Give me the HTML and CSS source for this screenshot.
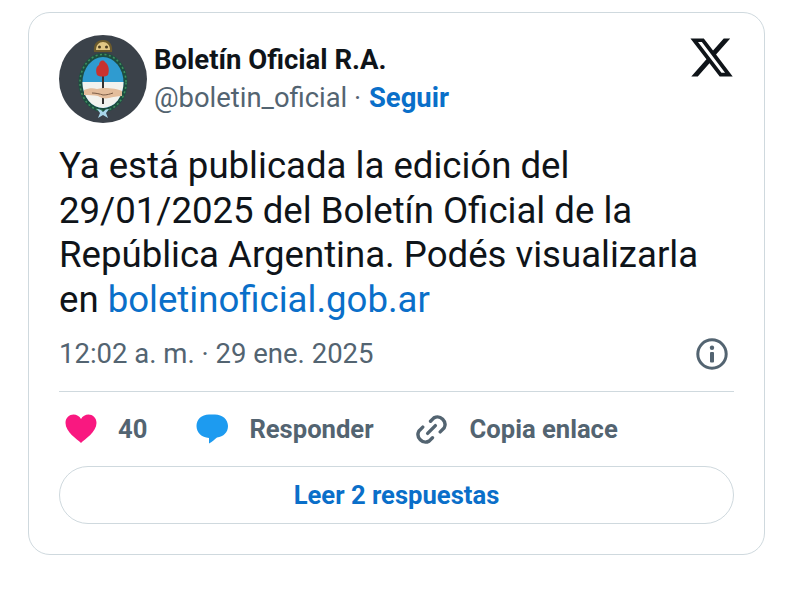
FILE: index.html
```html
<!DOCTYPE html>
<html lang="es">
<head>
    <meta charset="UTF-8">
    <title>Boletín Oficial R.A.</title>
    <link rel="stylesheet" href="styles.css">
</head>
<body>

<div class="tweet">
    <div class="header">
        <svg class="avatar" viewBox="0 0 88 88">
            <circle cx="44" cy="44" r="44" fill="#3b424a"/>
            <!-- sol -->
            <path d="M35 17 c-1 -8 3 -12 9 -12 c6 0 10 4 9 12 z" fill="#6b5a2c"/>
            <path d="M37 15 c0 -5 3 -8 7 -8 c4 0 7 3 7 8 z" fill="#e0c684"/>
            <circle cx="40.500" cy="12" r="1.500" fill="#4a3d20"/>
            <circle cx="47.500" cy="12" r="1.500" fill="#4a3d20"/>
            <!-- escudo -->
            <ellipse cx="44" cy="47.500" rx="24.500" ry="29.500" fill="#1d4d40"/>
            <ellipse cx="44" cy="47.500" rx="23" ry="28" fill="none" stroke="#3f8f5e" stroke-width="1.600" stroke-dasharray="2 2.500"/>
            <ellipse cx="44" cy="47.500" rx="20.500" ry="25.500" fill="#2f9bd0"/>
            <path d="M23.500 47 h41 a20.500 25.500 0 0 1 -41 1 z" fill="#f2f2ee"/>
            <rect x="43" y="36" width="2" height="33" fill="#33312f"/>
            <path d="M38 40 c-2 -6 0 -9 2 -10 c0 -4 4 -6 6 -3 c3 2 5 7 3 13 c-3 2 -8 2 -11 0 z" fill="#c8322e"/>
            <path d="M25 55 c5 -2 9 -2 13 -1 l6 -1 c5 0 12 0 19 3 v5 c-5 0 -9 1 -13 2 c-4 1 -8 0 -11 -2 c-4 -1 -9 -1 -14 -1 z" fill="#e3bd9c"/>
            <path d="M33 58 c4 0 8 1 11 2 c4 0 7 -1 10 -2" fill="none" stroke="#7a5b45" stroke-width="1"/>
            <!-- cinta -->
            <path d="M38 74 c3 0 4 1 6 3 c2 -2 3 -3 6 -3 l-3 4 l2 5 l-5 -3 l-5 3 l2 -5 z" fill="#a9d6ea"/>
        </svg>
        <div class="author">
            <div class="name">Boletín Oficial R.A.</div>
            <div class="handle">@boletin_oficial <span class="dot">·</span> <a class="follow">Seguir</a></div>
        </div>
        <svg class="x-logo" viewBox="0 0 24 24">
            <path d="M18.244 2.25h3.308l-7.227 8.26 8.502 11.24H16.17l-5.214-6.817L4.99 21.75H1.68l7.73-8.835L1.254 2.25H8.08l4.713 6.231zm-1.161 17.52h1.833L7.084 4.126H5.117z"/>
        </svg>
    </div>

    <p class="text">Ya está publicada la edición del<br>29/01/2025 del Boletín Oficial de la<br>República Argentina. Podés visualizarla<br>en <a class="link">boletinoficial.gob.ar</a></p>

    <div class="meta">
        <span class="date">12:02 a. m. · 29 ene. 2025</span>
        <svg class="info" viewBox="0 0 34 34">
            <circle cx="17" cy="17" r="14.200" fill="none" stroke="#536471" stroke-width="3"/>
            <circle cx="17" cy="10.800" r="2.200" fill="#536471"/>
            <rect x="15" y="15" width="4" height="10.500" rx="1" fill="#536471"/>
        </svg>
    </div>

    <div class="actions">
        <div class="action like">
            <svg class="icon" viewBox="0 0 32 30">
                <path d="M16 29 C12 25 0.500 18 0.500 9 C0.500 3.500 4.500 0.500 8.500 0.500 C11.500 0.500 14.500 2 16 5 C17.500 2 20.500 0.500 23.500 0.500 C27.500 0.500 31.500 3.500 31.500 9 C31.500 18 20 25 16 29 Z" fill="#f91880"/>
            </svg>
            <span>40</span>
        </div>
        <div class="action reply">
            <svg class="icon" viewBox="0 0 32 30">
                <path d="M13 0.500 H19 C26.500 0.500 32 5.500 32 12 C32 18.500 27.500 22.500 21 23.500 C18.500 25.500 16 28 13 29.500 L13 24 C5.500 23.500 0.500 18.500 0.500 12 C0.500 5.500 5.500 0.500 13 0.500 Z" fill="#1d9bf0"/>
            </svg>
            <span>Responder</span>
        </div>
        <div class="action copy">
            <svg class="icon" viewBox="0 0 32 32" fill="none" stroke="#536471" stroke-width="3.500" stroke-linecap="round">
                <path d="M15 7.500 L18.500 4 A7.800 7.800 0 0 1 29 14.500 L25 18.500"/>
                <path d="M17 24.500 L13.500 28 A7.800 7.800 0 0 1 3 17.500 L7 13.500"/>
                <path d="M12 20 L20 12"/>
            </svg>
            <span>Copia enlace</span>
        </div>
    </div>

    <div class="more">Leer 2 respuestas</div>
</div>

</body>
</html>
```

FILE: styles.css
```css
body {
    margin: 0;
    background-color: #fff;
    font-family: Roboto, "Liberation Sans", sans-serif;
    color: #0f1419;
}
a {
    color: inherit;
}
.tweet {
    box-sizing: border-box;
    width: 737px;
    height: 543px;
    margin: 12px 0 0 28px;
    padding: 21px 30px 0 30px;
    border: 1px solid #cfd9de;
    border-radius: 22px;
}
.header {
    display: flex;
    align-items: center;
    height: 90px;
}
.avatar {
    width: 88px;
    height: 88px;
    flex-shrink: 0;
}
.author {
    margin-left: 7px;
    flex-grow: 1;
}
.name {
    font-size: 27.500px;
    font-weight: 700;
    line-height: 34px;
}
.handle {
    margin-top: 4px;
    font-size: 27.400px;
    line-height: 34px;
    color: #536471;
}
.dot {
    margin-right: 1px;
}
.follow {
    color: #0a6fc9;
    font-weight: 700;
}
.x-logo {
    align-self: flex-start;
    width: 47px;
    height: 47px;
    margin-right: -1px;
    margin-top: 0;
    fill: #0f1419;
}
.text {
    margin: 20px 0 0 0;
    font-size: 36.600px;
    line-height: 44.500px;
}
.link {
    color: #0a6fc9;
}
.meta {
    display: flex;
    justify-content: space-between;
    align-items: center;
    height: 49px;
    margin-top: 7px;
    border-bottom: 1px solid #cfd9de;
    padding-bottom: 13px;
    color: #536471;
    font-size: 27.500px;
}
.info {
    width: 34px;
    height: 34px;
    margin-right: 5px;
}
.actions {
    display: flex;
    align-items: center;
    height: 74px;
    font-size: 25.600px;
    font-weight: 700;
    color: #536471;
}
.action {
    display: flex;
    align-items: center;
}
.icon {
    width: 32px;
    height: 30px;
}
.like .icon {
    margin-left: 6px;
}
.like span {
    margin-left: 21px;
}
.reply {
    margin-left: 49px;
}
.reply span {
    margin-left: 21px;
}
.copy {
    margin-left: 42px;
}
.copy .icon {
    width: 31px;
    height: 31px;
}
.copy span {
    margin-left: 23px;
}
.more {
    display: flex;
    justify-content: center;
    align-items: center;
    height: 56px;
    border: 1px solid #cfd9de;
    border-radius: 30px;
    font-size: 25.600px;
    font-weight: 700;
    color: #0a6fc9;
}
```
